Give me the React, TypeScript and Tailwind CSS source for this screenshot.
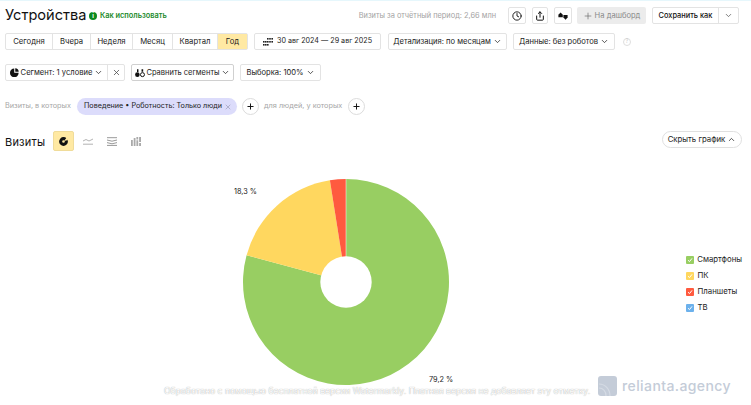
import React from "react";
import { ChevronDown, ChevronUp, Clock, Plus, Share, X } from "lucide-react";

const periods = ["Сегодня", "Вчера", "Неделя", "Месяц", "Квартал", "Год"];
const periodWidths = ["w-[47px]", "w-[38px]", "w-[42px]", "w-[40px]", "w-[45px]", "w-[29px]"];

const legend = [
  { name: "Смартфоны", color: "bg-[#98ce62]" },
  { name: "ПК", color: "bg-[#ffd75f]" },
  { name: "Планшеты", color: "bg-[#ff5a3f]" },
  { name: "ТВ", color: "bg-[#6cb1ec]" },
];

const btn =
  "flex h-[17px] items-center justify-center gap-[2px] rounded-[2px] border border-[#e3e3e3] bg-white text-[7.6px] text-[#222] whitespace-nowrap";

function CalendarIcon() {
  return (
    <svg width="10" height="8" viewBox="0 0 10 8" fill="#222">
      <rect x="4" y="0" width="1.6" height="1.6" />
      <rect x="6.2" y="0" width="1.6" height="1.6" />
      <rect x="8.4" y="0" width="1.6" height="1.6" />
      <rect x="0" y="3" width="1.6" height="1.6" />
      <rect x="2" y="3" width="1.6" height="1.6" />
      <rect x="4" y="3" width="1.6" height="1.6" />
      <rect x="6.2" y="3" width="1.6" height="1.6" />
      <rect x="8.4" y="3" width="1.6" height="1.6" />
      <rect x="0" y="6" width="1.6" height="1.6" />
      <rect x="2" y="6" width="1.6" height="1.6" />
      <rect x="4" y="6" width="1.6" height="1.6" />
    </svg>
  );
}

function SegmentIcon() {
  return (
    <svg width="9" height="9" viewBox="0 0 10 10" fill="#111">
      <path d="M5.8 0.3a4.3 4.3 0 0 1 3.9 3.9H5.8z" />
      <path d="M4.7 0.6v4.8h4.9A4.8 4.8 0 1 1 4.7 0.6z" />
    </svg>
  );
}

function CompareIcon() {
  return (
    <svg width="10" height="10" viewBox="0 0 11 10" fill="#111">
      <circle cx="2.6" cy="6.8" r="2.5" />
      <circle cx="8.2" cy="6.8" r="2.2" fill="none" stroke="#111" strokeWidth="1.1" />
      <path d="M2.2 1h1.6v3H2.2zM7.2 1h1.8v2.6H7.2z" />
    </svg>
  );
}

function AddRound() {
  return (
    <div className="flex h-[17px] w-[17px] items-center justify-center rounded-full border border-[#dcdcdc] bg-white">
      <Plus size={9} strokeWidth={2.6} color="#111" />
    </div>
  );
}

function Pie() {
  // центр 104,104 — сектора идут по часовой от верха
  const pt = (share: number, r: number) => {
    const a = share * 2 * Math.PI;
    return `${(104 + r * Math.sin(a)).toFixed(2)} ${(104 - r * Math.cos(a)).toFixed(2)}`;
  };
  const slice = (from: number, to: number) =>
    `M${pt(from, 103)}A103 103 0 ${to - from > 0.5 ? 1 : 0} 1 ${pt(to, 103)}L104 104Z`;
  return (
    <svg width="208" height="208" viewBox="0 0 208 208">
      <path d={slice(0, 0.792)} fill="#98ce62" />
      <path d={slice(0.792, 0.975)} fill="#ffd75f" />
      <path d={slice(0.975, 1)} fill="#ff5a3f" />
      <line x1="104" y1="104" x2="104" y2="1" stroke="#fff" strokeWidth="0.5" />
      <circle cx="104" cy="104" r="25.7" fill="#fff" />
    </svg>
  );
}

export default function App() {
  return (
    <div className="relative h-[405px] w-[751px] overflow-hidden bg-white font-['Inter',sans-serif] text-[#222]">
      <div className="h-[1px] bg-[#e6f7fc]" />

      <div className="flex h-[27px] items-center pl-[5px] pr-[12px] pt-[2px]">
        <h1 className="w-[78px] text-[14.6px] leading-none whitespace-nowrap text-[#111]">Устройства</h1>
        <div className="ml-[6px] flex h-[8px] w-[8px] items-center justify-center rounded-full bg-[#0c8a1f] text-[6px] font-bold leading-none text-white">
          i
        </div>
        <span className="ml-[3px] text-[7.4px] font-semibold text-[#1c8a2c]">Как использовать</span>
        <span className="ml-auto text-[7.4px] text-[#a3a3a3]">Визиты за отчётный период: 2,66 млн</span>
        <div className={`${btn} ml-[12px] w-[18px]`}>
          <Clock size={10} strokeWidth={2.2} color="#111" />
        </div>
        <div className={`${btn} ml-[6px] w-[16px]`}>
          <Share size={10} strokeWidth={2.4} color="#111" />
        </div>
        <div className={`${btn} ml-[6px] w-[18px]`}>
          <svg width="10" height="8" viewBox="0 0 10 8" fill="#111">
            <path d="M2.6 0.4 4.8 2.8v2.4H0.4V2.8z" />
            <path d="M5.4 3h4.2v2.4L7.6 7.8 5.4 5.4z" />
          </svg>
        </div>
        <div className="ml-[5px] flex h-[17px] w-[69px] items-center justify-center gap-[2px] rounded-[2px] bg-[#ececec] text-[7.6px] text-[#8a8a8a]">
          <Plus size={10} strokeWidth={1.6} color="#666" />
          На дашборд
        </div>
        <div className="ml-[6px] flex h-[17px] w-[87px] rounded-[2px] border border-[#e3e3e3] text-[7.4px] text-[#111]">
          <div className="flex flex-1 items-center justify-center border-r border-[#e3e3e3] font-medium">Сохранить как</div>
          <div className="flex w-[19px] items-center justify-center">
            <ChevronDown size={9} color="#555" />
          </div>
        </div>
      </div>

      <div className="mt-[5px] flex items-center pl-[5px]">
        <div className="flex h-[17px] rounded-[2px] border border-[#e3e3e3] text-[7.7px]">
          {periods.map((p, i) => (
            <div
              key={p}
              className={`flex items-center justify-center border-[#e3e3e3] ${periodWidths[i]} ${
                p === "Год" ? "bg-[#ffe9a3]" : "border-r"
              }`}
            >
              {p}
            </div>
          ))}
        </div>
        <div className={`${btn} ml-[6px] w-[127px] gap-[4px] !text-[7.2px]`}>
          <CalendarIcon />
          30 авг 2024 — 29 авг 2025
        </div>
        <div className={`${btn} ml-[7px] w-[119px]`}>
          Детализация: по месяцам
          <ChevronDown size={9} />
        </div>
        <div className={`${btn} ml-[6px] w-[102px]`}>
          Данные: без роботов
          <ChevronDown size={9} />
        </div>
        <div className="ml-[8px] flex h-[8px] w-[8px] items-center justify-center rounded-full border border-[#dedede] text-[5.5px] leading-none text-[#cfcfcf]">
          ?
        </div>
      </div>

      <div className="mt-[14px] flex items-center pl-[5px]">
        <div className="flex h-[17px] w-[120px] rounded-[2px] border border-[#e3e3e3] text-[7.6px]">
          <div className="flex w-[102px] items-center justify-center gap-[2px] border-r border-[#e3e3e3] whitespace-nowrap">
            <SegmentIcon />
            Сегмент: 1 условие
            <ChevronDown size={9} />
          </div>
          <div className="flex flex-1 items-center justify-center">
            <X size={9} color="#444" />
          </div>
        </div>
        <div className={`${btn} ml-[6px] w-[103px] !gap-[1px] !border-[#d0d0d0] !text-[7.5px]`}>
          <CompareIcon />
          Сравнить сегменты
          <ChevronDown size={9} />
        </div>
        <div className={`${btn} ml-[6px] w-[81px]`}>
          Выборка: 100%
          <ChevronDown size={9} />
        </div>
      </div>

      <div className="mt-[17px] flex items-center pl-[5px] text-[7.3px] text-[#a6a6a6]">
        <span className="w-[72px] whitespace-nowrap">Визиты, в которых</span>
        <div className="flex h-[17px] w-[160px] items-center justify-between rounded-full bg-[#dcdcfb] pl-[7px] pr-[5px] text-[7.2px] text-[#222] whitespace-nowrap">
          Поведение • Роботность: Только люди
          <X size={8} color="#9a9ab5" />
        </div>
        <div className="ml-[5px]">
          <AddRound />
        </div>
        <span className="ml-[5px] w-[78px] whitespace-nowrap">для людей, у которых</span>
        <div className="ml-[6px]">
          <AddRound />
        </div>
      </div>

      <div className="mt-[16px] flex items-start pl-[5px] pr-[9px]">
        <span className="mt-[2px] w-[48px] text-[11px] leading-[18px] tracking-[0.2px] text-[#111]">Визиты</span>
        <div className="flex h-[20px] w-[21px] items-center justify-center rounded-[2px] border border-[#f0dc9a] bg-[#ffe9a3]">
          <svg width="9" height="9" viewBox="0 0 10 10">
            <circle cx="5" cy="5" r="3.2" fill="none" stroke="#111" strokeWidth="3.4" />
            <path d="M5.6 4.4 8.6 .6 10 3.4Z" fill="#ffe9a3" />
          </svg>
        </div>
        <div className="ml-[3px] flex h-[20px] w-[21px] items-center justify-center">
          <svg width="10" height="7" viewBox="0 0 10 7" fill="none" stroke="#aaa" strokeWidth="0.9">
            <path d="M0 3 3 1.5 6 3 10 1M0 6.2h10" />
          </svg>
        </div>
        <div className="ml-[3px] flex h-[20px] w-[21px] items-center justify-center">
          <svg width="10" height="9" viewBox="0 0 10 9" fill="none" stroke="#999" strokeWidth="1">
            <path d="M0 .7h10M0 3l5 1.2L10 3M0 5.6l5 1.2 5-1.2M0 8.4h10" />
          </svg>
        </div>
        <div className="ml-[3px] flex h-[20px] w-[21px] items-center justify-center">
          <svg width="10" height="9" viewBox="0 0 10 9" fill="#aaa">
            <path d="M0 3h1.8v6H0zM2.7 1h1.8v8H2.7zM5.4 0h1.8v2.4H5.4zM5.4 3.2h1.8V9H5.4zM8.1 0H10v5H8.1zM8.1 6H10v3H8.1z" />
          </svg>
        </div>
        <div className="ml-auto flex h-[17px] w-[80px] items-center justify-center gap-[2px] rounded-full border border-[#e0e0e0] text-[7.8px] text-[#222]">
          Скрыть график
          <ChevronUp size={9} />
        </div>
      </div>

      <div className="relative mt-[27px] flex items-start">
        <div className="ml-[242px]">
          <Pie />
        </div>
        <div className="ml-auto mr-[9px] mt-[76px] flex w-[56px] flex-col gap-[5px]">
          {legend.map((l) => (
            <div key={l.name} className="flex h-[11px] items-center gap-[3.5px] text-[7.8px] text-[#222]">
              <div className={`flex h-[8px] w-[8px] items-center justify-center rounded-[1px] ${l.color}`}>
                <svg width="6" height="6" viewBox="0 0 6 6" fill="none" stroke="#fff" strokeWidth="1">
                  <path d="M1 3.2 2.5 4.6 5 1.4" />
                </svg>
              </div>
              {l.name}
            </div>
          ))}
        </div>
        <span className="absolute left-[234px] top-[9px] text-[7.3px] text-[#222]">18,3 %</span>
        <span className="absolute left-[429px] top-[197px] text-[7.3px] text-[#222]">79,2 %</span>
      </div>

      <div className="absolute left-[164px] top-[385px] text-[8.6px] text-white [text-shadow:0_0_1px_#8f8f8f] whitespace-nowrap">
        Обработано с помощью бесплатной версии Watermarkly. Платная версия не добавляет эту отметку.
      </div>
      <div className="absolute left-[598px] top-[375px] flex items-center gap-[5px]">
        <div className="flex h-[20px] w-[19px] items-end justify-start overflow-hidden rounded-[3px] bg-[#c4ccd8]">
          <svg width="16" height="16" viewBox="0 0 16 16" fill="none" stroke="#d5dbe4" strokeWidth="1.2">
            <path d="M1 4c6 0 11 5 11 12M1 8c4 0 7 3 7 8" />
          </svg>
        </div>
        <span className="text-[14px] font-medium tracking-[0.4px] text-[#c4ccd8]">relianta.agency</span>
      </div>
    </div>
  );
}
